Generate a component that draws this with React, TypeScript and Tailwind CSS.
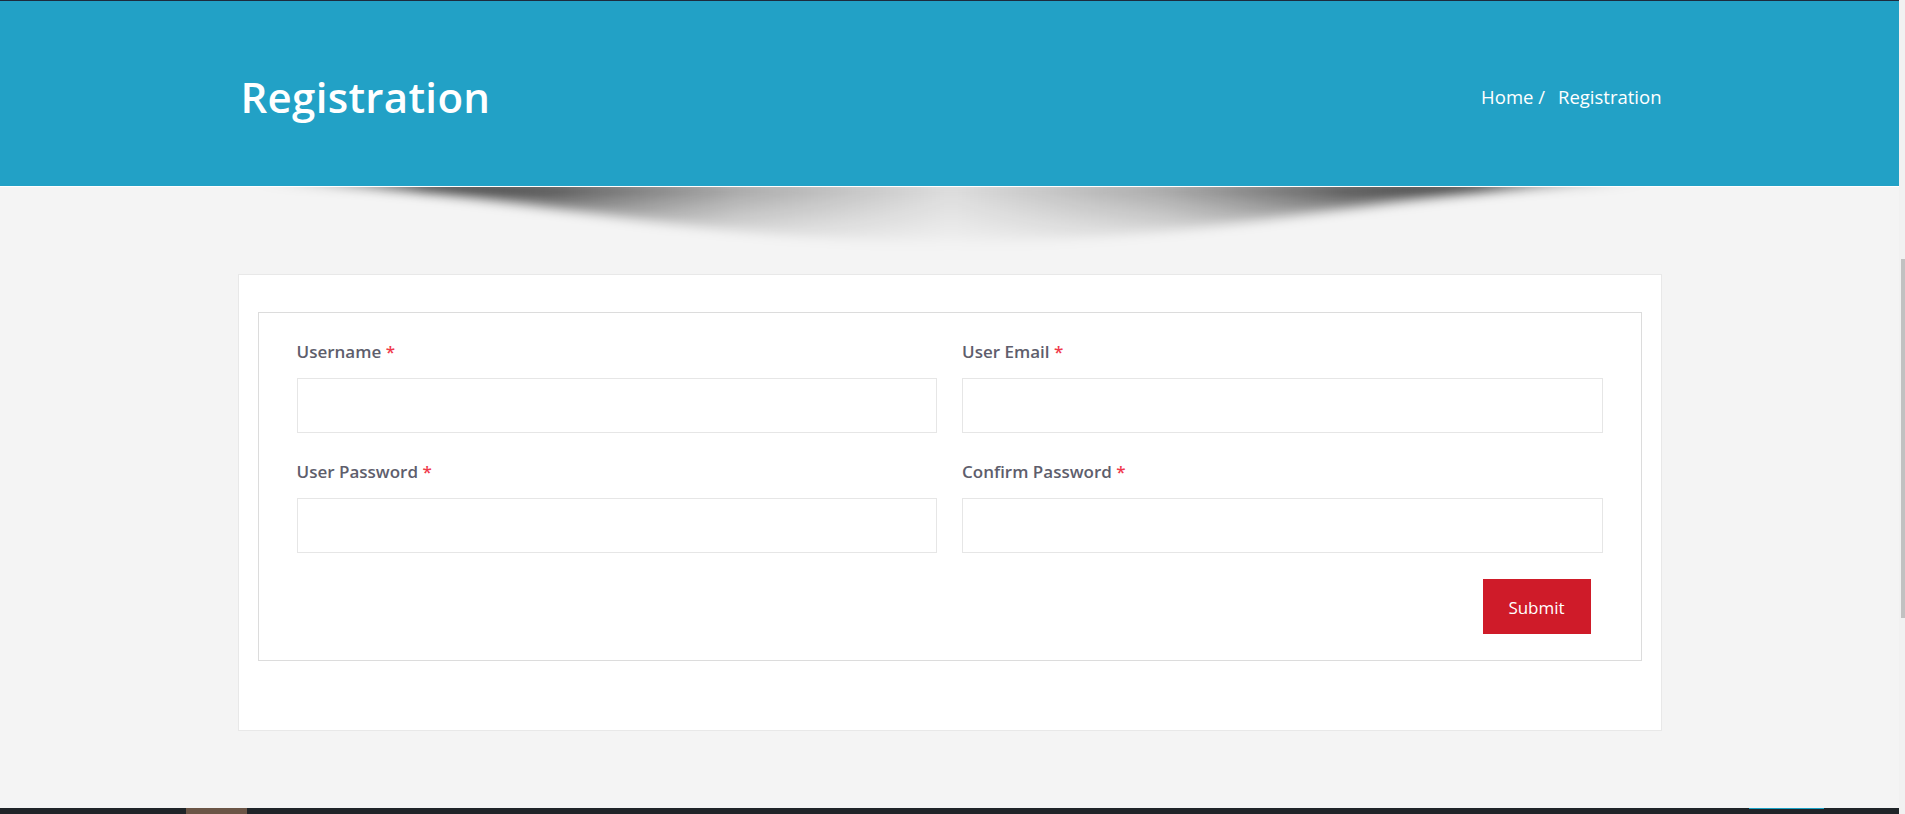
export default function App() {
  const fields = [
    ['Username', 'User Email'],
    ['User Password', 'Confirm Password'],
  ]

  return (
    <div className="flex h-[814px] w-full overflow-hidden bg-[#f4f4f4] font-['Open_Sans',sans-serif]">
      <div className="flex flex-1 flex-col">
        <div className="h-px bg-[#1d2b3d]" />
        <header className="h-[186px] border-b border-white bg-[#22a1c6]">
          <div className="mx-auto flex h-full w-[1424px] items-center justify-between pl-[3px] pt-[6px]">
            <h1 className="text-[42px] font-semibold leading-none tracking-[0.3px] text-white">Registration</h1>
            <div className="flex gap-[13px] text-[18.5px] text-white">
              <span>Home /</span>
              <span>Registration</span>
            </div>
          </div>
        </header>

        <div className="flex h-[87px] justify-center">
          <svg width="1420" height="80" viewBox="0 0 1420 80" className="ml-[2px]">
            <defs>
              <linearGradient id="sh" x1="0" x2="1" y1="0" y2="0">
                <stop offset="0" stopColor="#000" stopOpacity="0" />
                <stop offset="0.04" stopColor="#000" stopOpacity="0.4" />
                <stop offset="0.13" stopColor="#000" stopOpacity="0.75" />
                <stop offset="0.22" stopColor="#000" stopOpacity="0.65" />
                <stop offset="0.35" stopColor="#000" stopOpacity="0.32" />
                <stop offset="0.5" stopColor="#000" stopOpacity="0.1" />
                <stop offset="0.65" stopColor="#000" stopOpacity="0.32" />
                <stop offset="0.78" stopColor="#000" stopOpacity="0.65" />
                <stop offset="0.87" stopColor="#000" stopOpacity="0.75" />
                <stop offset="0.96" stopColor="#000" stopOpacity="0.4" />
                <stop offset="1" stopColor="#000" stopOpacity="0" />
              </linearGradient>
              <linearGradient id="fade" x1="0" x2="0" y1="0" y2="1">
                <stop offset="0" stopColor="#fff" stopOpacity="1" />
                <stop offset="0.7" stopColor="#fff" stopOpacity="0.15" />
                <stop offset="1" stopColor="#fff" stopOpacity="0" />
              </linearGradient>
              <mask id="m">
                <rect width="1420" height="80" fill="url(#fade)" />
              </mask>
              <filter id="b" x="-5%" y="-50%" width="110%" height="200%">
                <feGaussianBlur stdDeviation="6" />
              </filter>
            </defs>
            <g mask="url(#m)">
              <path
                d="M0,-6 H1420 C1160,-2 970,58 710,58 C450,58 260,-2 0,-6 Z"
                fill="url(#sh)"
                filter="url(#b)"
              />
            </g>
          </svg>
        </div>

        <div className="mx-auto w-[1424px] border border-[#e8e8e8] bg-white px-[19px] pb-[69px] pt-[37px]">
          <div className="border border-[#dcdcdc] px-[38px] pb-[26px] pt-[27px]">
            <div className="flex flex-col gap-[27px]">
              {fields.map((row, i) => (
                <div key={i} className="grid grid-cols-2 gap-[25px]">
                  {row.map((label) => (
                    <div key={label}>
                      <label className="block text-[17px] font-semibold leading-[24px] text-[#5e5e6c]">
                        {label} <span className="text-[#f03a4c]">*</span>
                      </label>
                      <input className="mt-[14px] block h-[55px] w-full border border-[#e6e6e6] bg-white outline-none" />
                    </div>
                  ))}
                </div>
              ))}
            </div>
            <div className="mt-[26px] flex justify-end pr-[12px]">
              <button className="h-[55px] w-[108px] bg-[#cf1b29] pt-[2px] text-[17px] text-white">Submit</button>
            </div>
          </div>
        </div>

        <div className="flex-1" />
        <div className="flex h-[6px] bg-[#1f2428]">
          <div className="ml-[186px] w-[61px] bg-[#6b5546]" />
          <div className="flex-1" />
          <div className="mr-[75px] w-[75px] border-t border-[#1aa0c4]" />
        </div>
      </div>

      <div className="flex w-[6px] justify-end bg-[#f1f1f1] pt-[259px]">
        <div className="h-[359px] w-[4px] bg-[#c1c1c1]" />
      </div>
    </div>
  )
}
